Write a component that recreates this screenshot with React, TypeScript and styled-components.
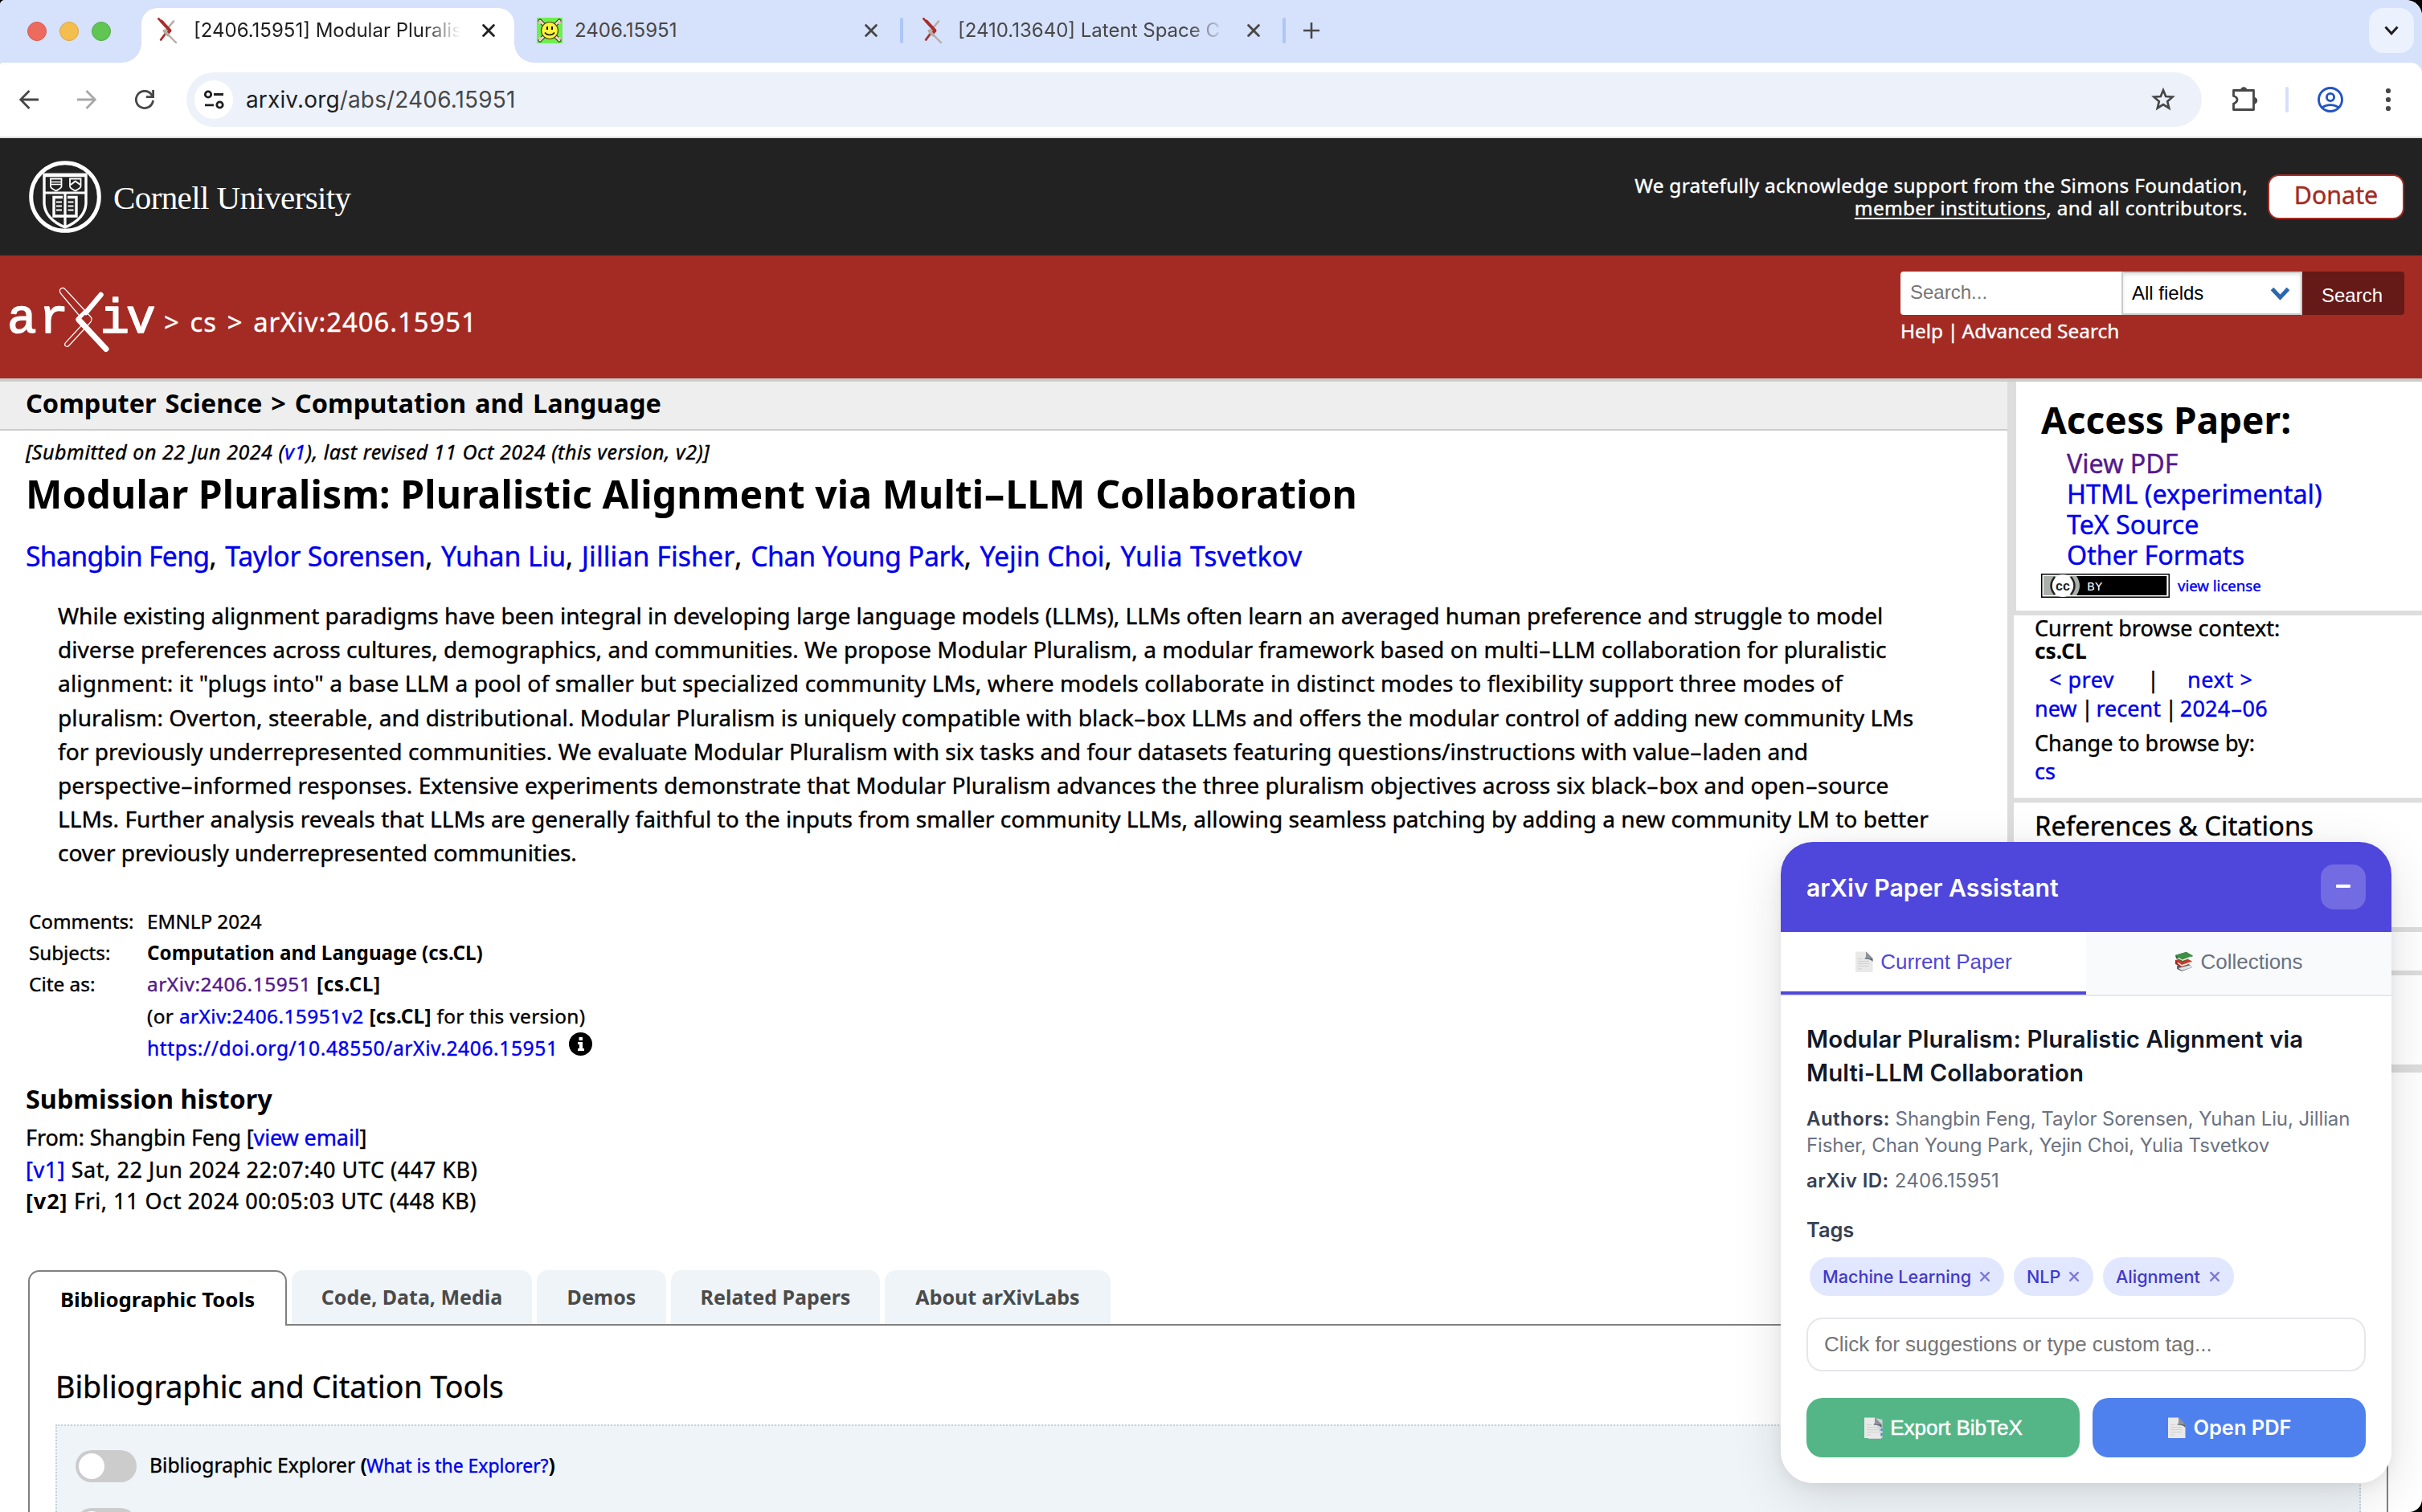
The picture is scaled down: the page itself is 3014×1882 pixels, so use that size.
import React from "react";
import styled, { createGlobalStyle } from "styled-components";

const GlobalStyle = createGlobalStyle`
  *, *::before, *::after { box-sizing: border-box; }
  html, body { margin: 0; padding: 0; background: #000; overflow: hidden; }
  svg { display: block; flex: none; }
`;

const PAGE_FONT = `"Noto Sans", "Open Sans", sans-serif`;
const UI_FONT = `Inter, Roboto, sans-serif`;
const FORM_FONT = `"Liberation Sans", Arial, sans-serif`;
const INK = `-webkit-text-stroke: 0.4px;`;

const Window = styled.div`
  position: relative;
  width: 3014px;
  height: 1882px;
  overflow: hidden;
  background: #fff;
  border-radius: 6px 20px 16px 0;
  font-family: ${PAGE_FONT};
  color: #000;
`;

/* ---------- text ---------- */
const Line = styled.div<{ $s: number; $l: number; $ls?: number; $ws?: number; $b?: boolean; $i?: boolean; $mt?: number }>`
  font-size: ${(p) => p.$s}px;
  line-height: ${(p) => p.$l}px;
  height: ${(p) => p.$l}px;
  letter-spacing: ${(p) => p.$ls ?? 0}px;
  word-spacing: ${(p) => p.$ws ?? 0}px;
  font-weight: ${(p) => (p.$b ? 700 : 400)};
  font-style: ${(p) => (p.$i ? "italic" : "normal")};
  margin-top: ${(p) => p.$mt ?? 0}px;
  white-space: pre;
  ${(p) => !p.$b && INK}
`;
const Link = styled.a<{ $visited?: boolean; $ls?: number; $s?: number }>`
  color: ${(p) => (p.$visited ? "#551a8b" : "#0000ee")};
  ${(p) => p.$ls !== undefined && `letter-spacing: ${p.$ls}px;`}
  ${(p) => p.$s !== undefined && `font-size: ${p.$s}px;`}
`;
const Strong = styled.b<{ $ls?: number }>`
  font-weight: 700;
  letter-spacing: ${(p) => p.$ls ?? 0}px;
  -webkit-text-stroke: 0;
`;
const Spaced = styled.span<{ $ls: number }>`
  letter-spacing: ${(p) => p.$ls}px;
`;
const WideHyphen = styled.span`
  display: inline-block;
  transform: scaleX(1.7);
  margin: 0 0.12em;
  letter-spacing: 0;
`;
const Dashed = ({ children }: { children: string }) => (
  <>
    {children.split("-").map((part, i) => (
      <React.Fragment key={i}>
        {i > 0 && <WideHyphen>-</WideHyphen>}
        {part}
      </React.Fragment>
    ))}
  </>
);

/* ---------- browser chrome ---------- */
const TabStrip = styled.div`
  display: flex;
  align-items: flex-start;
  height: 78px;
  padding: 10px 10px 0 34px;
  background: #d6e1fb;
  font-family: ${UI_FONT};
`;
const Lights = styled.div`
  display: flex;
  gap: 16px;
  margin-top: 17px;
  width: 142px;
`;
const Light = styled.i<{ $c: string; $e: string }>`
  width: 24px;
  height: 24px;
  border-radius: 50%;
  background: ${(p) => p.$c};
  border: 1px solid ${(p) => p.$e};
`;
const Tab = styled.div<{ $w: number; $pl: number; $pr: number; $active?: boolean }>`
  position: relative;
  display: flex;
  align-items: center;
  width: ${(p) => p.$w}px;
  height: ${(p) => (p.$active ? 68 : 56)}px;
  padding: 0 ${(p) => p.$pr}px ${(p) => (p.$active ? 12 : 0)}px ${(p) => p.$pl}px;
  background: ${(p) => (p.$active ? "#fff" : "transparent")};
  border-radius: 20px 20px 0 0;
  color: ${(p) => (p.$active ? "#1f1f1f" : "#474747")};
  ${(p) =>
    p.$active &&
    `
    &::before, &::after { content: ""; position: absolute; bottom: 0; width: 24px; height: 24px; }
    &::before { left: -24px; background: radial-gradient(circle at 0 0, transparent 23.5px, #fff 24px); }
    &::after { right: -24px; background: radial-gradient(circle at 100% 0, transparent 23.5px, #fff 24px); }
  `}
`;
const TabTitle = styled.span<{ $ml: number; $fade?: boolean }>`
  flex: 1;
  min-width: 0;
  overflow: hidden;
  white-space: nowrap;
  margin-left: ${(p) => p.$ml}px;
  font-size: 24px;
  line-height: 34px;
  ${(p) => p.$fade && `margin-right: 27px; mask-image: linear-gradient(to right, #000 calc(100% - 46px), transparent 100%);`}
`;
const Separator = styled.i<{ $c: string; $w?: number }>`
  flex: none;
  width: 4px;
  height: 32px;
  border-radius: 2px;
  background: ${(p) => p.$c};
`;
const StripItem = styled.div<{ $ml: number }>`
  display: flex;
  align-items: center;
  height: 56px;
  margin-left: ${(p) => p.$ml}px;
`;
const TabMenu = styled.div`
  display: grid;
  place-items: center;
  width: 56px;
  height: 56px;
  margin-left: auto;
  border-radius: 18px;
  background: #ebf2fd;
`;
const ToolbarWrap = styled.div`
  background: #d6e1fb;
`;
const Toolbar = styled.div`
  display: flex;
  align-items: center;
  height: 94px;
  padding: 0 36px 0 24px;
  background: #fff;
  border-bottom: 2px solid #dedede;
  border-radius: 4px 14px 0 0;
  font-family: ${UI_FONT};
`;
const NavButtons = styled.div`
  display: flex;
  gap: 48px;
  margin-right: 40px;
`;
const Omnibox = styled.div`
  flex: 1;
  display: flex;
  align-items: center;
  height: 68px;
  padding: 0 32px 0 10px;
  border-radius: 34px;
  background: #edf2fa;
`;
const SiteInfo = styled.div`
  display: grid;
  place-items: center;
  width: 48px;
  height: 48px;
  border-radius: 50%;
  background: #fff;
`;
const Url = styled.div`
  flex: 1;
  margin-left: 16px;
  font-size: 28px;
  line-height: 40px;
  letter-spacing: 0.15px;
  color: #474747;
  b { font-weight: 400; color: #1f1f1f; }
`;
const ToolbarActions = styled.div`
  display: flex;
  align-items: center;
  margin-left: 38px;
  & > *:nth-child(2) { margin: 0 36px 0 34px; }
  & > *:nth-child(4) { margin-left: 50px; }
`;

/* ---------- page headers ---------- */
const CornellBar = styled.header`
  display: flex;
  align-items: center;
  justify-content: space-between;
  height: 146px;
  padding: 0 22px 0 35px;
  background: #222;
  color: #fff;
`;
const CornellBrand = styled.div`
  display: flex;
  align-items: center;
  gap: 14px;
`;
const CornellName = styled.span`
  font-family: "Liberation Serif", "Times New Roman", serif;
  font-size: 41px;
  line-height: 50px;
  letter-spacing: -0.6px;
  margin-top: 2px;
  white-space: nowrap;
`;
const Support = styled.div`
  display: flex;
  align-items: center;
`;
const SupportText = styled.p`
  margin: 0 25px 0 0;
  text-align: right;
  font-size: 24.4px;
  line-height: 28px;
  letter-spacing: 0.28px;
  ${INK}
  u { text-decoration-thickness: 2px; text-underline-offset: 3px; }
`;
const Donate = styled.button`
  width: 170px;
  height: 56px;
  padding: 0 0 5px;
  border: 2px solid #a42b23;
  border-radius: 14px;
  background: #fff;
  color: #a42b23;
  font: 400 30.4px/47px ${PAGE_FONT};
  ${INK}
`;
const RedBar = styled.div`
  display: flex;
  justify-content: space-between;
  height: 157px;
  padding: 20px 22px 0 8px;
  background: #a42b23;
  border-bottom: 4px solid #ccc;
  color: #fff;
`;
const LogoRow = styled.div`
  display: flex;
  gap: 6px;
`;
const PaperPath = styled.div`
  margin-top: 39px;
  font-size: 32.8px;
  line-height: 48px;
  letter-spacing: 1px;
  word-spacing: 3.2px;
  white-space: nowrap;
  ${INK}
`;
const SearchArea = styled.div`
  width: 627px;
`;
const SearchRow = styled.div`
  display: flex;
  height: 54px;
  font: 24px/52px ${FORM_FONT};
`;
const SearchInput = styled.div`
  width: 275px;
  padding-left: 12px;
  background: #fff;
  border-radius: 4px 0 0 4px;
  color: #757575;
`;
const SearchSelect = styled.div`
  display: flex;
  align-items: center;
  justify-content: space-between;
  width: 225px;
  padding: 0 13px 0 11px;
  border: 2px solid #ccc;
  background: #fff;
  box-shadow: inset 0 2px 4px rgba(0, 0, 0, 0.12);
  color: #000;
`;
const SearchButton = styled.div`
  flex: 1;
  padding-right: 3px;
  background: #661a17;
  border-radius: 0 4px 4px 0;
  text-align: center;
  line-height: 59px;
`;
const SearchLinks = styled.div`
  margin-top: 3px;
  font-size: 24.4px;
  line-height: 34px;
  white-space: nowrap;
  ${INK}
`;

/* ---------- main columns ---------- */
const Columns = styled.div`
  display: flex;
  height: 1106px;
`;
const Article = styled.main`
  width: 2498px;
`;
const Subject = styled.div`
  height: 61px;
  padding-left: 32px;
  background: #eee;
  border-bottom: 2px solid #ccc;
`;
const ArticleBody = styled.div`
  padding: 9px 0 0 32px;
`;
const Abstract = styled.div`
  margin-top: 31px;
  padding-left: 40px;
`;
const Meta = styled.div`
  display: grid;
  grid-template-columns: 147px 1fr;
  margin: 44px 0 0 4px;
`;
const DoiRow = styled.div`
  display: flex;
  gap: 13px;
  padding-top: 1px;
`;
const Sidebar = styled.aside`
  width: 516px;
  height: 860px;
  border-left: 8px solid #ddd;
`;
const SideBlock = styled.section<{ $h: number; $b: number; $pl: number; $pt?: number; $bl?: boolean }>`
  height: ${(p) => p.$h}px;
  padding: ${(p) => p.$pt ?? 0}px 0 0 ${(p) => p.$pl}px;
  border-bottom: ${(p) => p.$b}px solid #ddd;
  ${(p) => p.$bl && "border-left: 3px solid #ddd;"}
`;
const AccessList = styled.div`
  margin-top: 6px;
  padding-left: 32px;
`;
const LicenseRow = styled.div`
  display: flex;
  align-items: center;
  gap: 10px;
  margin-top: 4px;
`;
const PrevNext = styled.div`
  display: grid;
  grid-template-columns: 122px 50px auto;
  justify-content: start;
  margin-top: 3px;
  padding-left: 18px;
`;

/* ---------- labs ---------- */
const Labs = styled.section`
  padding: 0 42px 0 35px;
`;
const LabTabs = styled.div`
  display: flex;
  gap: 6px;
  height: 67px;
`;
const LabTab = styled.div<{ $w: number; $active?: boolean }>`
  width: ${(p) => p.$w}px;
  height: ${(p) => (p.$active ? 69 : 67)}px;
  border-radius: 14px 14px 0 0;
  text-align: center;
  font-weight: 700;
  font-size: ${(p) => (p.$active ? 25.8 : 25)}px;
  line-height: ${(p) => (p.$active ? 68 : 66)}px;
  white-space: nowrap;
  position: relative;
  color: ${(p) => (p.$active ? "#000" : "#4a4a4a")};
  background: ${(p) => (p.$active ? "#fff" : "#eff4f9")};
  border: ${(p) => (p.$active ? "2px solid #808080" : "0")};
  border-bottom: 0;
`;
const LabPanel = styled.div`
  height: 300px;
  padding: 51px 32px 0;
  border: 2px solid #808080;
`;
const LabBox = styled.div`
  margin-top: 22px;
  height: 200px;
  padding: 30px 0 0 23px;
  border: 2px dotted #c3d0dc;
  background: #eff4f9;
`;
const LabRow = styled.div`
  display: flex;
  gap: 16px;
  height: 72px;
`;
const Toggle = styled.div`
  width: 76px;
  height: 40px;
  padding: 4px;
  border-radius: 20px;
  background: #ccc;
  &::after { content: ""; display: block; width: 32px; height: 32px; border-radius: 50%; background: #fff; }
`;

/* ---------- assistant ---------- */
const Assistant = styled.div`
  position: absolute;
  left: 2216px;
  top: 1048px;
  width: 760px;
  height: 798px;
  border-radius: 40px;
  overflow: hidden;
  background: #fff;
  font-family: ${UI_FONT};
`;
const AssistantShadow = styled.div`
  position: absolute;
  left: 2216px;
  top: 1048px;
  width: 760px;
  height: 798px;
  border-radius: 40px;
  box-shadow: 0 16px 64px rgba(0, 0, 0, 0.12), 0 4px 16px rgba(0, 0, 0, 0.06);
`;
const AssistantHead = styled.div`
  display: flex;
  align-items: center;
  justify-content: space-between;
  height: 112px;
  padding: 2px 32px 0;
  background: #4f46db;
  color: #fff;
  font-size: 30.2px;
  font-weight: 600;
`;
const Minimize = styled.div`
  display: grid;
  place-items: center;
  width: 56px;
  height: 56px;
  margin-bottom: 2px;
  border-radius: 16px;
  background: rgba(255, 255, 255, 0.2);
  &::after { content: ""; width: 18px; height: 4px; margin-bottom: 3px; background: #fff; border-radius: 1px; }
`;
const AssistantTabs = styled.div`
  display: flex;
  height: 80px;
  border-bottom: 2px solid #e5e7eb;
`;
const AssistantTab = styled.div<{ $active?: boolean }>`
  flex: 1;
  display: flex;
  align-items: center;
  justify-content: center;
  gap: 8px;
  padding-bottom: ${(p) => (p.$active ? 0 : 4)}px;
  border-bottom: ${(p) => (p.$active ? "4px solid #4f46db" : "0")};
  background: ${(p) => (p.$active ? "#fff" : "#f8fafc")};
  color: ${(p) => (p.$active ? "#4f46db" : "#6b7280")};
  font: 26px/30px ${FORM_FONT};
`;
const AssistantBody = styled.div`
  padding: 33px 32px 0;
`;
const PaperTitle = styled.div`
  font-size: 29.4px;
  font-weight: 600;
  line-height: 42px;
  letter-spacing: 0.09px;
  color: #111827;
  white-space: pre;
`;
const PaperMeta = styled.div<{ $mt: number; $ls?: number }>`
  margin-top: ${(p) => p.$mt}px;
  font-size: 24px;
  line-height: 33px;
  letter-spacing: ${(p) => p.$ls ?? -0.1}px;
  color: #6b7280;
  white-space: pre;
  b { font-weight: 600; letter-spacing: 0.45px; color: #374151; }
`;
const TagsLabel = styled.div`
  margin-top: 28px;
  font-size: 25.4px;
  font-weight: 600;
  line-height: 34px;
  color: #374151;
`;
const Tags = styled.div`
  display: flex;
  gap: 12px;
  margin: 17px 0 0 4px;
`;
const Tag = styled.div<{ $w: number }>`
  display: flex;
  align-items: center;
  justify-content: space-between;
  width: ${(p) => p.$w}px;
  height: 48px;
  padding: 0 18px 0 16px;
  border-radius: 24px;
  background: #e0e7ff;
  color: #4338ca;
  font-size: 21.6px;
  font-weight: 500;
  white-space: nowrap;
`;
const TagInput = styled.div`
  height: 67px;
  margin-top: 27px;
  padding-left: 20px;
  border: 2px solid #e5e7eb;
  border-radius: 20px;
  color: #757575;
  font: 26px/63px ${FORM_FONT};
`;
const Actions = styled.div`
  display: flex;
  gap: 16px;
  margin-top: 33px;
`;
const Action = styled.div<{ $c: string; $ui?: boolean }>`
  flex: 1;
  display: flex;
  align-items: center;
  justify-content: center;
  gap: 9px;
  height: 74px;
  border-radius: 20px;
  background: ${(p) => p.$c};
  color: #fff;
  font: ${(p) => (p.$ui ? `600 25.4px/30px ${UI_FONT}` : `26px/30px ${FORM_FONT}`)};
  ${(p) => !p.$ui && "-webkit-text-stroke: 0.5px #fff;"}
`;

/* ---------- drawings ---------- */
const ArxivMark = () => (
  <svg width="24" height="32" viewBox="0 0 24 32" strokeLinecap="round" fill="none">
    <path d="M20 4.5 9 17.5" stroke="#b5aca5" strokeWidth="2.6" />
    <path d="M10.5 19 4.2 27.5" stroke="#aa2d29" strokeWidth="2.8" />
    <path d="M1.4 1.4 15.500 16.500" stroke="#aa2d29" strokeWidth="2.8" />
    <path d="M5 4.500 15.500 16 12.500 19.500" stroke="#aa2d29" strokeWidth="4" strokeLinejoin="round" />
    <path d="M8.500 16.500 23 31" stroke="#b5aca5" strokeWidth="2.4" />
    <path d="M8.500 16.500 13 21.500" stroke="#b5aca5" strokeWidth="4" />
  </svg>
);
const SmileMark = () => (
  <svg width="32" height="32" viewBox="0 0 32 32">
    <rect width="32" height="32" fill="#6df04b" />
    <path d="M4 4 28 28M28 4 4 28" stroke="#333" strokeWidth="5" strokeLinecap="round" />
    <path d="M4 4 28 28M28 4 4 28" stroke="#f6d9c8" strokeWidth="3" strokeLinecap="round" />
    <circle cx="4" cy="6" r="2" fill="#e8c6b8" /><circle cx="28" cy="6" r="2" fill="#e8c6b8" />
    <circle cx="4" cy="26" r="2" fill="#e8c6b8" /><circle cx="28" cy="26" r="2" fill="#e8c6b8" />
    <circle cx="16" cy="16" r="10.500" fill="#fff23c" stroke="#4b4613" strokeWidth="1.200" />
    <rect x="12" y="11" width="2" height="4" fill="#111" /><rect x="18" y="11" width="2" height="4" fill="#111" />
    <path d="M10 18.500c3 4 9 4 12 0" fill="none" stroke="#111" strokeWidth="1.500" />
  </svg>
);
const CloseIcon = ({ s = 16, w = 2.8, c = "#474747" }: { s?: number; w?: number; c?: string }) => (
  <svg width={s} height={s} viewBox="0 0 16 16" fill="none" stroke={c} strokeWidth={w} strokeLinecap="round">
    <path d="M1.600 1.600 14.400 14.400M14.400 1.600 1.600 14.400" />
  </svg>
);
const ArrowIcon = ({ flip, c }: { flip?: boolean; c: string }) => (
  <svg width="24" height="24" viewBox="0 0 24 24" fill="none" stroke={c} strokeWidth="2.800">
    <path d={flip ? "M0 12H22M11.500 1 22.300 12 11.500 23" : "M24 12H2M12.500 1 1.700 12 12.500 23"} />
  </svg>
);
const ReloadIcon = () => (
  <svg width="24" height="24" viewBox="0 0 24 24" fill="none" stroke="#474747" strokeWidth="2.800">
    <path d="M22.500 13A10.600 10.600 0 1 1 20.400 5.500L22 8" />
    <path d="M22.600 0V8.600H13.800" />
  </svg>
);
const TuneIcon = () => (
  <svg width="26" height="24" viewBox="0 0 26 24" fill="none" stroke="#1f1f1f" strokeWidth="2.800">
    <circle cx="6" cy="5.500" r="3.700" /><path d="M13 5.500H25M2 18.800H13" />
    <circle cx="20.500" cy="18.500" r="3.700" />
  </svg>
);
const StarIcon = () => (
  <svg width="32" height="32" viewBox="0 0 32 32" fill="none" stroke="#474747" strokeWidth="2.700">
    <path d="M16 4.200 19.200 12 27.600 12.700 21.200 18.200 23.200 26.500 16 22 8.800 26.500 10.800 18.200 4.400 12.700 12.800 12Z" />
  </svg>
);
const PuzzleIcon = () => (
  <svg width="32" height="32" viewBox="0 0 32 32">
    <path d="M1.500 4.500H26.500V28.500H1.500V21C7.500 19 7.500 13 1.500 11.500Z" fill="none" stroke="#474747" strokeWidth="2.800" strokeLinejoin="round" />
    <path d="M10 3.500a4.200 4.200 0 0 1 8.400 0zM27 12a4.200 4.200 0 0 1 0 8.400z" transform="translate(0 1)" fill="#474747" />
  </svg>
);
const ProfileIcon = () => (
  <svg width="32" height="32" viewBox="0 0 32 32" fill="none" stroke="#2253c6" strokeWidth="2.900">
    <circle cx="16" cy="16" r="14.500" /><circle cx="16" cy="13" r="4.600" />
    <path d="M6 26C11 21.500 21 21.500 26 26" />
  </svg>
);
const DotsIcon = () => (
  <svg width="12" height="32" viewBox="0 0 12 32" fill="#474747">
    <circle cx="6" cy="5" r="3.100" /><circle cx="6" cy="16" r="3.100" /><circle cx="6" cy="27" r="3.100" />
  </svg>
);
const Chevron = ({ w, h, s, c }: { w: number; h: number; s: number; c: string }) => (
  <svg width={w} height={h} viewBox={`0 0 ${w} ${h}`} fill="none" stroke={c} strokeWidth={s}>
    <path d={`M${s / 2} ${s / 2}L${w / 2} ${h - s / 1.3}L${w - s / 2} ${s / 2}`} />
  </svg>
);
const CornellSeal = () => (
  <svg width="92" height="92" viewBox="0 0 92 92" fill="none" stroke="#fff" strokeWidth="3">
    <circle cx="46" cy="46" r="42.300" strokeWidth="5" />
    <path d="M20 18.500H72V53C72 68 60 78 46 84 32 78 20 68 20 53Z" strokeWidth="3.400" />
    <path d="M19 19H73" strokeWidth="4.500" />
    <path d="M20 41H72M46 41V83" strokeWidth="3.200" />
    <path d="M28 23.500H41.500V33C41.500 35.500 37 37 34.700 38.500 32 37 28 35.500 28 33Z" strokeWidth="1.800" />
    <path d="M28 27.500H41M28 30.500H41" strokeWidth="1.400" />
    <path d="M52 23.500H65.500V33C65.500 35.500 61 37 58.700 38.500 56 37 52 35.500 52 33Z" strokeWidth="1.800" />
    <path d="M53 31 58.700 26.500 65 31" strokeWidth="2" />
    <path d="M43 46.500H32V70H60V46.500H49" strokeWidth="3.400" />
    <path d="M35 52.500H42M35 57.500H42M35 62.500H42M49.500 52.500H56.500M49.500 57.500H56.500M49.500 62.500H56.500" strokeWidth="1.800" />
  </svg>
);
const ArxivLogo = () => (
  <svg width="190" height="104" viewBox="8 338 190 104">
    <g fill="#fff" stroke="#fff" strokeWidth="1.500" strokeLinejoin="round" fontFamily="'Liberation Mono', monospace" fontSize="61">
      <text x="9" y="414">a</text>
      <text x="48.500" y="414">r</text>
      <text x="124.500" y="414">i</text>
      <text x="157" y="414">v</text>
    </g>
    <g fill="none" stroke="#fff" strokeLinecap="round">
      <path d="M125.500 367 107 389" strokeWidth="6.500" />
      <path d="M98 398 132 434.500" strokeWidth="7" />
      <path d="M75.500 359.500C79 357 80.500 359.500 83 362L113 394.500C115.500 397.500 114 400 111 403L86 430C83.500 433 79 430.500 81.500 426.500L101 405.500M75.500 359.500C73 361.500 75 365 77 367L98 392" strokeWidth="1.200" />
      <path d="M97 397 106 388" strokeWidth="5" />
    </g>
  </svg>
);
const InfoIcon = () => (
  <svg width="29" height="29" viewBox="0 0 29 29">
    <circle cx="14.500" cy="14.500" r="14.500" />
    <path fill="#fff" d="M12.500 6h4.500v4h-4.500zM11 12h6v8h2v3h-8v-3h2v-5h-2z" />
  </svg>
);
const CcBadge = () => (
  <svg width="160" height="30" viewBox="0 0 160 30">
    <rect width="160" height="30" />
    <rect x="1.500" y="1.500" width="157" height="27" fill="#fff" />
    <rect x="3" y="3" width="154" height="24" fill="#abb1aa" />
    <path d="M44 3H156V27H44Q52 15 44 3Z" />
    <circle cx="27" cy="15" r="14" fill="#fff" />
    <path d="M17 4Q8 15 17 26M37 4Q46 15 37 26" fill="none" stroke="#222" strokeWidth="2.500" />
    <text x="18" y="20.500" fontFamily="Liberation Sans, sans-serif" fontWeight="700" fontSize="16" fill="#222">cc</text>
    <text x="57" y="20.500" fontFamily="DejaVu Sans, sans-serif" fontSize="14.500" letterSpacing="1" fill="#fff">BY</text>
  </svg>
);
const PageEmoji = ({ marks }: { marks?: boolean }) => (
  <svg width="24" height="27" viewBox="0 0 24 27">
    <path d="M1 .5H14L22.500 9V26H1Z" fill="#e9e9e9" />
    {marks && <path d="M14 1 23.500 3V26H6V27H22Z" fill="#cfd3d8" />}
    {marks && <path d="M22.500 14v3M22.500 20v3" stroke="#3b82f6" strokeWidth="2" />}
    <path d="M14 .5 22.500 9V13C20 10 17 9.500 12.500 10 14.500 7 15 4 14 .5Z" fill="#555c63" />
    <path d="M14 .5C17 3 20 6 22.500 10 19 8.500 16 8.500 12.500 10 14.500 7 15 4 14 .5Z" fill="#8d9499" />
    <path d="M4 9.500h6M4 12.500h14M4 15.500h14M4 18.500h14M4 22h5" stroke="#cfcfcf" strokeWidth="1" />
  </svg>
);
const BooksEmoji = () => (
  <svg width="24" height="26" viewBox="0 0 24 26">
    <path d="M3 18 17 15 22 20 9 25 3 22Z" fill="#5d6670" /><path d="M5 21 19 17.500 22 20 9 24Z" fill="#dfe3e6" />
    <path d="M1 11 15 9 22 14 9 20 1 16Z" fill="#a3271c" /><path d="M3 14.500 20 11.500 22 14.500 9 19Z" fill="#f0e6e0" /><path d="M1 11 16 9.500 22 12.500 9 17Z" fill="#c23a2b" />
    <path d="M1 5 15 1 23 6 10 13 2 9Z" fill="#2c6b2f" /><path d="M3 8.500 20 5.500 22 8 10 12Z" fill="#dfe8dc" /><path d="M1 5 14 1 23 5.500 9.500 10.500Z" fill="#3f8f45" />
  </svg>
);

const authors: [string, number][] = [
  ["Shangbin Feng", -0.7],
  ["Taylor Sorensen", -0.25],
  ["Yuhan Liu", -0.1],
  ["Jillian Fisher", 0.1],
  ["Chan Young Park", -0.4],
  ["Yejin Choi", 0],
  ["Yulia Tsvetkov", 0.4],
];
const abstractLines: [string, number][] = [
  ["While existing alignment paradigms have been integral in developing large language models (LLMs), LLMs often learn an averaged human preference and struggle to model", -0.024],
  ["diverse preferences across cultures, demographics, and communities. We propose Modular Pluralism, a modular framework based on multi-LLM collaboration for pluralistic", 0.024],
  ['alignment: it "plugs into" a base LLM a pool of smaller but specialized community LMs, where models collaborate in distinct modes to flexibility support three modes of', 0.126],
  ["pluralism: Overton, steerable, and distributional. Modular Pluralism is uniquely compatible with black-box LLMs and offers the modular control of adding new community LMs", 0.057],
  ["for previously underrepresented communities. We evaluate Modular Pluralism with six tasks and four datasets featuring questions/instructions with value-laden and", 0.024],
  ["perspective-informed responses. Extensive experiments demonstrate that Modular Pluralism advances the three pluralism objectives across six black-box and open-source", 0.047],
  ["LLMs. Further analysis reveals that LLMs are generally faithful to the inputs from smaller community LLMs, allowing seamless patching by adding a new community LM to better", 0.033],
  ["cover previously underrepresented communities.", -0.04],
];
const labTabs: [string, number][] = [
  ["Code, Data, Media", 299],
  ["Demos", 161],
  ["Related Papers", 260],
  ["About arXivLabs", 281],
];
const tags: [string, number][] = [["Machine Learning", 242], ["NLP", 99], ["Alignment", 163]];

export default function App() {
  return (
    <>
      <GlobalStyle />
      <Window>
        <TabStrip>
          <Lights>
            <Light $c="#ec6a5e" $e="#d8594e" />
            <Light $c="#f4be4f" $e="#dca63c" />
            <Light $c="#61c554" $e="#50ad43" />
          </Lights>
          <Tab $w={464} $pl={20} $pr={24} $active>
            <ArxivMark />
            <TabTitle $fade $ml={21}>[2406.15951] Modular Pluralism</TabTitle>
            <CloseIcon c="#1f1f1f" />
          </Tab>
          <Tab $w={480} $pl={28} $pr={28}>
            <SmileMark />
            <TabTitle $ml={15}>2406.15951</TabTitle>
            <CloseIcon />
          </Tab>
          <StripItem $ml={0}><Separator $c="#adc6f7" /></StripItem>
          <Tab $w={472} $pl={24} $pr={28}>
            <ArxivMark />
            <TabTitle $fade $ml={20}>[2410.13640] Latent Space C</TabTitle>
            <CloseIcon />
          </Tab>
          <StripItem $ml={0}><Separator $c="#adc6f7" /></StripItem>
          <StripItem $ml={22}>
            <svg width="20" height="20" viewBox="0 0 20 20" stroke="#474747" strokeWidth="2.600"><path d="M10 0V20M0 10H20" /></svg>
          </StripItem>
          <TabMenu><Chevron w={18} h={12} s={3} c="#1f1f1f" /></TabMenu>
        </TabStrip>
        <ToolbarWrap>
          <Toolbar>
            <NavButtons>
              <ArrowIcon c="#474747" />
              <ArrowIcon c="#a8a8a8" flip />
              <ReloadIcon />
            </NavButtons>
            <Omnibox>
              <SiteInfo><TuneIcon /></SiteInfo>
              <Url><b>arxiv.org</b>/abs/2406.15951</Url>
              <StarIcon />
            </Omnibox>
            <ToolbarActions>
              <PuzzleIcon />
              <Separator $c="#d3e0fb" />
              <ProfileIcon />
              <DotsIcon />
            </ToolbarActions>
          </Toolbar>
        </ToolbarWrap>

        <CornellBar>
          <CornellBrand>
            <CornellSeal />
            <CornellName>Cornell University</CornellName>
          </CornellBrand>
          <Support>
            <SupportText>
              We gratefully acknowledge support from the Simons Foundation,<br />
              <u>member institutions</u>, and all contributors.
            </SupportText>
            <Donate>Donate</Donate>
          </Support>
        </CornellBar>
        <RedBar>
          <LogoRow>
            <ArxivLogo />
            <PaperPath>&gt; cs &gt; arXiv:2406.15951</PaperPath>
          </LogoRow>
          <SearchArea>
            <SearchRow>
              <SearchInput>Search...</SearchInput>
              <SearchSelect>All fields<Chevron w={25} h={17} s={5} c="#2a67ad" /></SearchSelect>
              <SearchButton>Search</SearchButton>
            </SearchRow>
            <SearchLinks>Help<Spaced $ls={-0.9}> | </Spaced>Advanced Search</SearchLinks>
          </SearchArea>
        </RedBar>

        <Columns>
          <Article>
            <Subject><Line $s={32.5} $l={54} $ws={2.4} $b>Computer Science &gt; Computation and Language</Line></Subject>
            <ArticleBody>
              <Line $s={25} $l={34} $ls={0.55} $i>[Submitted on 22 Jun 2024 (<Link>v1</Link>), last revised 11 Oct 2024 (this version, v2)]</Line>
              <Line $s={48.1} $l={60} $ls={0.08} $mt={6} $b><Dashed>Modular Pluralism: Pluralistic Alignment via Multi-LLM Collaboration</Dashed></Line>
              <Line $s={33.8} $l={44} $mt={25}>
                {authors.map(([name, ls], i) => (
                  <React.Fragment key={name}>{i > 0 && <Spaced $ls={1}>, </Spaced>}<Link $ls={ls}>{name}</Link></React.Fragment>
                ))}
              </Line>
              <Abstract>
                {abstractLines.map(([text, ls]) => <Line key={text} $s={28.1} $l={42.2} $ls={ls}><Dashed>{text}</Dashed></Line>)}
              </Abstract>
              <Meta>
                <Line $s={24.2} $l={39.4}>Comments:</Line>
                <Line $s={24.2} $l={39.4}>EMNLP 2024</Line>
                <Line $s={24.2} $l={39.4}>Subjects:</Line>
                <Line $s={24.2} $l={39.4} $b>Computation and Language (cs.CL)</Line>
                <Line $s={24.4} $l={39.4}>Cite as:</Line>
                <Line $s={24.4} $l={39.4} $ls={0.55}><Link $visited>arXiv:2406.15951</Link> <Strong $ls={0.5}>[cs.CL]</Strong></Line>
                <span />
                <Line $s={24.4} $l={39.4} $ls={0.35}>(or <Link $ls={0.45}>arXiv:2406.15951v2</Link> <Strong $ls={0.2}>[cs.CL]</Strong> for this version)</Line>
                <span />
                <DoiRow><Line $s={24.6} $l={39.4} $ls={0.6}><Link>https://doi.org/10.48550/arXiv.2406.15951</Link></Line><InfoIcon /></DoiRow>
              </Meta>
              <Line $s={32.4} $l={44} $mt={21} $b>Submission history</Line>
              <Line $s={27} $l={39.4} $mt={7} $ls={-0.12}>From: Shangbin Feng [<Link>view email</Link>]</Line>
              <Line $s={27} $l={39.4} $ls={0.55}><Link>[v1]</Link> Sat, 22 Jun 2024 22:07:40 UTC (447 KB)</Line>
              <Line $s={27} $l={39.4} $ls={0.55}><Strong $ls={0.9}>[v2]</Strong> Fri, 11 Oct 2024 00:05:03 UTC (448 KB)</Line>
            </ArticleBody>
          </Article>
          <Sidebar>
            <SideBlock $h={291} $b={6} $pl={31} $pt={17} $bl>
              <Line $s={46} $l={60} $b>Access Paper:</Line>
              <AccessList>
                <Line $s={32.2} $l={37.9}><Link $visited>View PDF</Link></Line>
                <Line $s={32.4} $l={37.9}><Link>HTML (experimental)</Link></Line>
                <Line $s={32.2} $l={37.9}><Link>TeX Source</Link></Line>
                <Line $s={32.2} $l={37.9}><Link>Other Formats</Link></Line>
              </AccessList>
              <LicenseRow>
                <CcBadge />
                <Line $s={18.6} $l={26}><Link>view license</Link></Line>
              </LicenseRow>
            </SideBlock>
            <SideBlock $h={233} $b={6} $pl={26} $pt={1}>
              <Line $s={27} $l={29}>Current browse context:</Line>
              <Line $s={26.4} $l={29} $b>cs.CL</Line>
              <PrevNext>
                <Line $s={27} $l={36}><Link $ls={0.5}>&lt; prev</Link></Line>
                <Line $s={27} $l={36}>|</Line>
                <Line $s={27} $l={36}><Link $ls={0.6}>next &gt;</Link></Line>
              </PrevNext>
              <Line $s={27} $l={36}><Link>new</Link><Spaced $ls={-1.7}> | </Spaced><Link>recent</Link><Spaced $ls={-1.7}> | </Spaced><Link $ls={0.2}><Dashed>2024-06</Dashed></Link></Line>
              <Line $s={27} $l={36} $mt={7}>Change to browse by:</Line>
              <Line $s={27} $l={34}><Link>cs</Link></Line>
            </SideBlock>
            <SideBlock $h={161} $b={6} $pl={26} $pt={8}>
              <Line $s={32.8} $l={42}>References &amp; Citations</Line>
            </SideBlock>
            <SideBlock $h={54} $b={6} $pl={27} />
            <SideBlock $h={121} $b={10} $pl={27} />
          </Sidebar>
        </Columns>

        <Labs>
          <LabTabs>
            <LabTab $w={322} $active>Bibliographic Tools</LabTab>
            {labTabs.map(([t, w]) => <LabTab key={t} $w={w}>{t}</LabTab>)}
          </LabTabs>
          <LabPanel>
            <Line $s={37.6} $l={50}>Bibliographic and Citation Tools</Line>
            <LabBox>
              <LabRow>
                <Toggle />
                <Line $s={24.7} $l={38}>Bibliographic Explorer <Strong $ls={-1}>(</Strong><Link $s={22.9}>What is the Explorer?</Link><Strong>)</Strong></Line>
              </LabRow>
              <LabRow><Toggle /></LabRow>
            </LabBox>
          </LabPanel>
        </Labs>

        <AssistantShadow />
        <Assistant>
          <AssistantHead>arXiv Paper Assistant<Minimize /></AssistantHead>
          <AssistantTabs>
            <AssistantTab $active><PageEmoji />Current Paper</AssistantTab>
            <AssistantTab><BooksEmoji />Collections</AssistantTab>
          </AssistantTabs>
          <AssistantBody>
            <PaperTitle>{"Modular Pluralism: Pluralistic Alignment via\nMulti-LLM Collaboration"}</PaperTitle>
            <PaperMeta $mt={19}><b>Authors:</b>{" Shangbin Feng, Taylor Sorensen, Yuhan Liu, Jillian\nFisher, Chan Young Park, Yejin Choi, Yulia Tsvetkov"}</PaperMeta>
            <PaperMeta $mt={11} $ls={0.3}><b>arXiv ID:</b> 2406.15951</PaperMeta>
            <TagsLabel>Tags</TagsLabel>
            <Tags>
              {tags.map(([t, w]) => <Tag key={t} $w={w}>{t}<CloseIcon s={12} w={3.2} c="#8079dc" /></Tag>)}
            </Tags>
            <TagInput>Click for suggestions or type custom tag...</TagInput>
            <Actions>
              <Action $c="#54b687"><PageEmoji marks />Export BibTeX</Action>
              <Action $c="#4f81ee" $ui><PageEmoji />Open PDF</Action>
            </Actions>
          </AssistantBody>
        </Assistant>
      </Window>
    </>
  );
}
